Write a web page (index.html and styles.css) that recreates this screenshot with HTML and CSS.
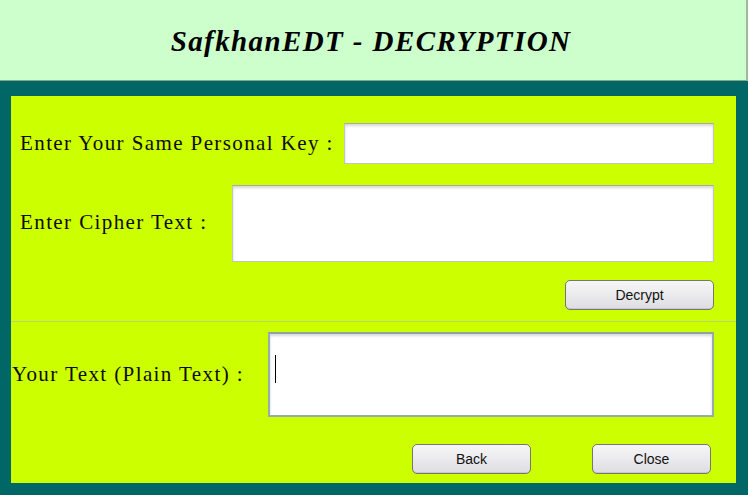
FILE: index.html
```html
<!DOCTYPE html>
<html>
<head>
<meta charset="utf-8">
<title>SafkhanEDT - DECRYPTION</title>
<link rel="stylesheet" href="styles.css">
</head>
<body>
<header class="header">
  <h1 class="title">SafkhanEDT - DECRYPTION</h1>
</header>
<main class="frame">
  <section class="panel">
    <div class="top">
      <div class="row row-key">
        <label class="label">Enter Your Same Personal Key :</label>
        <div class="field field-key"></div>
      </div>
      <div class="row row-cipher">
        <label class="label">Enter Cipher Text :</label>
        <div class="field field-cipher"></div>
      </div>
      <div class="actions actions-top">
        <button class="btn btn-decrypt">Decrypt</button>
      </div>
    </div>
    <div class="bottom">
      <div class="row row-plain">
        <label class="label label-plain">Your Text (Plain Text) :</label>
        <div class="field field-plain"><span class="caret"></span></div>
      </div>
      <div class="actions actions-bottom">
        <button class="btn btn-back">Back</button>
        <button class="btn btn-close">Close</button>
      </div>
    </div>
  </section>
</main>
</body>
</html>
```
FILE: styles.css
```css
html, body {
  margin: 0;
  padding: 0;
}
body {
  width: 748px;
  height: 495px;
  overflow: hidden;
  background: #006666;
  font-family: "Liberation Serif", "Times New Roman", serif;
}
.header {
  height: 81px;
  box-sizing: border-box;
  background: #ccffcc;
  border-bottom: 1px solid #86a586;
  border-right: 2px solid #9fb89f;
  display: flex;
  align-items: center;
  justify-content: center;
}
.title {
  margin: 0;
  padding-top: 2px;
  padding-right: 4px;
  font-size: 29px;
  font-weight: bold;
  font-style: italic;
  color: #000;
  letter-spacing: 1.4px;
}
.frame {
  padding: 14px 12px 12px 11px;
  border-top: 1px solid #006666;
}
.panel {
  height: 387px;
  background: #ccff00;
  display: flex;
  flex-direction: column;
}
.top {
  padding-top: 27px;
  border-bottom: 1px solid #b4d86a;
}
.row {
  display: flex;
  align-items: center;
}
.label {
  font-size: 21px;
  letter-spacing: 1.4px;
  color: #0c0c00;
  white-space: nowrap;
}
.row-key .label,
.row-cipher .label {
  padding-left: 9px;
}
.field {
  margin-left: auto;
  margin-right: 22px;
  background: #fff;
  box-sizing: border-box;
  border: 1px solid #c4c4c4;
  border-top-color: #a8a8a8;
  box-shadow: inset 0 2px 3px rgba(0, 0, 0, 0.16);
}
.field-key {
  width: 370px;
  height: 41px;
}
.row-cipher {
  margin-top: 21px;
}
.field-cipher {
  width: 482px;
  height: 77px;
}
.row-cipher .label {
  padding-bottom: 2px;
}
.actions {
  display: flex;
  justify-content: flex-end;
}
.actions-top {
  margin-top: 18px;
  margin-bottom: 11px;
  padding-right: 22px;
}
.btn {
  height: 30px;
  box-sizing: border-box;
  padding: 0;
  border: 1px solid #767676;
  border-radius: 5px;
  background: linear-gradient(#f6f6f6 0%, #ececef 45%, #dcdce2 100%);
  box-shadow: inset 0 -1px 0 #c8c8cc;
  font-family: "Liberation Sans", Arial, sans-serif;
  font-size: 14px;
  color: #111;
}
.btn-decrypt {
  width: 149px;
}
.bottom {
  padding-top: 10px;
}
.label-plain {
  padding-left: 1px;
}
.field-plain {
  width: 446px;
  height: 85px;
  border: 2px solid #97adab;
  border-top-color: #8ea4a2;
  display: flex;
  align-items: flex-start;
  padding-left: 5px;
  padding-top: 21px;
}
.caret {
  display: block;
  width: 1px;
  height: 28px;
  background: #000;
}
.actions-bottom {
  margin-top: 27px;
  padding-right: 25px;
  gap: 61px;
}
.btn-back,
.btn-close {
  width: 119px;
}
```
